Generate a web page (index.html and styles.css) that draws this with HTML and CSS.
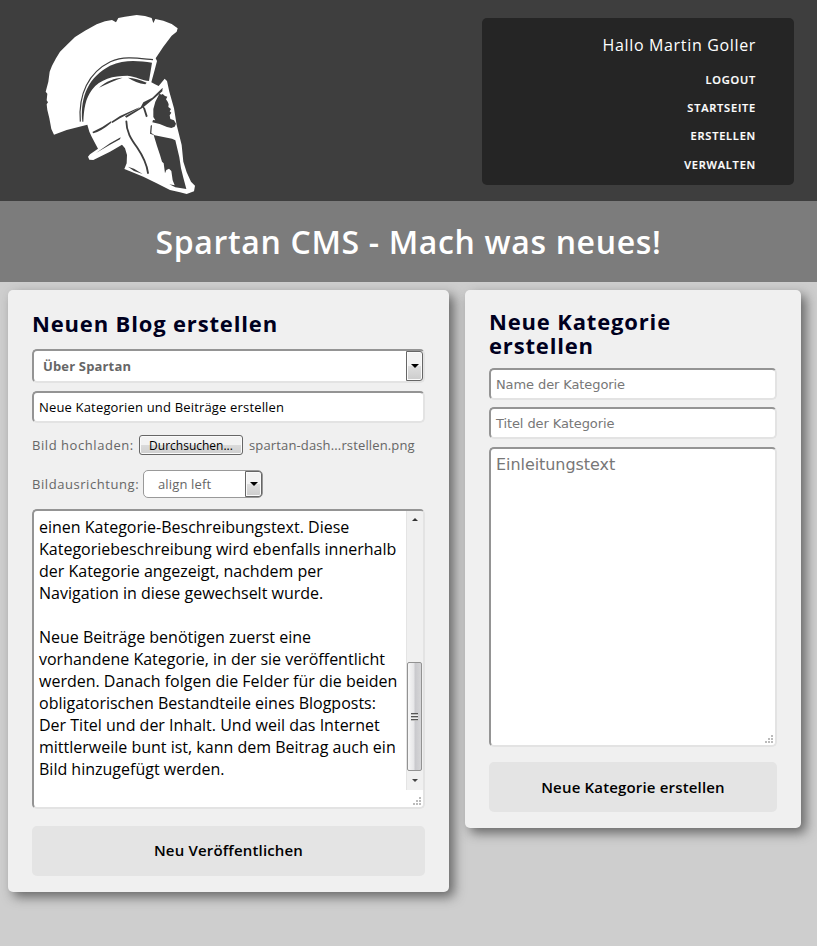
FILE: index.html
```html
<!DOCTYPE html>
<html lang="de">
<head>
<meta charset="utf-8">
<title>Spartan CMS</title>
<link rel="stylesheet" href="styles.css">
</head>
<body>
<header class="top">
  <svg class="logo" viewBox="0 0 540 600" aria-hidden="true">
    <path fill="#fff" d="M72 389L64 372 58 340 52 315 50 298 54 292 50 286 52 266 47 260 55 230 59 200 66 182 78 160 90 140 108 122 135 96 165 77 200 58 225 49 246 45 258 52 265 39 285 35 320 30 345 33 365 39 370 54 376 42 400 47 425 57 443 70 440 80 425 92 400 125 377 160 381 168 374 195 364 232 375 238 386 243 404 221 411 228 418 260 432 310 440 360 455 420 460 470 470 502 483 530 495 542 492 559 470 567 450 562 420 555 380 535 340 515 300 499 283 492 290 475 291 450 285 430 276 419 240 440 190 465 178 464 174 455 180 448 204 431 185 395 178 380 172 359 110 375Z"/>
    <g fill="#3e3e3e">
      <path d="M157 350C150 270 178 215 240 182C285 162 325 167 366 173L357 228C337 227 321 215 292 212C250 212 210 222 186 254C166 281 162 310 160 350Z"/>
      <path d="M207 248C228 228 254 219 278 218C256 224 230 237 207 248ZM294 218Q320 219 350 233L346 238Q317 233 294 218Z"/>
      <path d="M187 381Q215 370 243 349L244 353Q214 378 190 385ZM244 350L270 333 330 306 318 314 270 340 247 354ZM285 334L332 307 340 292 367 278 398 248 397 259 374 279 338 308 289 338Z"/>
      <path d="M337 302L345 309 353 334 348 337ZM198 444L240 415 272 397 270 403 240 419ZM294 485L312 491 338 507 312 498Z"/>
      <path d="M389 265L393 269 398 267 405 273 412 275 408 283 413 290 416 298 415 306 423 312 419 319 424 323 419 331 421 342 432 346 438 356 434 365 424 369 411 366 389 357 367 352 369 345 376 346 370 336 370 312 376 290Z"/>
      <path d="M362 362L360 386 371 390 381 423 390 450 396 470 401 475 405 505 409 495 417 491 424 498 428 526 434 541 418 538 436 547 469 552 460 518 453 490 448 457 436 406 426 401 374 391 364 384 366 360Z"/>
    </g>
    <path fill="none" stroke="#3e3e3e" stroke-width="3.5" d="M151 350C144 268 176 202 241 170C284 152 325 160 369 164"/>
    <path fill="none" stroke="#3e3e3e" stroke-width="5.5" stroke-linecap="round" d="M289 349C289 380 303 402 321 427C338 452 350 476 354 504"/>
  </svg>
  <nav class="user">
    <p class="hello">Hallo Martin Goller</p>
    <a>LOGOUT</a>
    <a>STARTSEITE</a>
    <a>ERSTELLEN</a>
    <a>VERWALTEN</a>
  </nav>
</header>
<h1 class="title">Spartan CMS - Mach was neues!</h1>
<main class="content">
  <section class="card blog">
    <h2>Neuen Blog erstellen</h2>
    <div class="field select"><b>Über Spartan</b><span class="arrow"></span></div>
    <div class="field text"><span class="posttitle">Neue Kategorien und Beiträge erstellen</span></div>
    <div class="row upload"><span class="lbl">Bild hochladen:</span><span class="browse"><span>Durchsuchen...</span></span><span class="file">spartan-dash...rstellen.png</span></div>
    <div class="row align"><span class="lbl">Bildausrichtung:</span><div class="mini"><span>align left</span><span class="arrow"></span></div></div>
    <div class="field area">
      <div class="copy">einen Kategorie-Beschreibungstext. Diese
Kategoriebeschreibung wird ebenfalls innerhalb
der Kategorie angezeigt, nachdem per
Navigation in diese gewechselt wurde.

Neue Beiträge benötigen zuerst eine
vorhandene Kategorie, in der sie veröffentlicht
werden. Danach folgen die Felder für die beiden
obligatorischen Bestandteile eines Blogposts:
Der Titel und der Inhalt. Und weil das Internet
mittlerweile bunt ist, kann dem Beitrag auch ein
Bild hinzugefügt werden.</div>
      <div class="scroll"><i class="up"></i><div class="thumb"><i></i></div><i class="down"></i></div>
      <svg class="grip" viewBox="0 0 8 8"><path d="M6 0h2v2H6zM3 3h2v2H3zM6 3h2v2H6zM0 6h2v2H0zM3 6h2v2H3zM6 6h2v2H6z"/></svg>
    </div>
    <div class="btn"><span>Neu Veröffentlichen</span></div>
  </section>
  <section class="card cat">
    <h2>Neue Kategorie erstellen</h2>
    <div class="field text ph"><span class="p1">Name der Kategorie</span></div>
    <div class="field text ph"><span class="p2">Titel der Kategorie</span></div>
    <div class="field area ph"><span class="intro">Einleitungstext</span>
      <svg class="grip" viewBox="0 0 8 8"><path d="M6 0h2v2H6zM3 3h2v2H3zM6 3h2v2H6zM0 6h2v2H0zM3 6h2v2H3zM6 6h2v2H6z"/></svg>
    </div>
    <div class="btn"><span>Neue Kategorie erstellen</span></div>
  </section>
</main>
</body>
</html>
```
FILE: styles.css
```css
* { box-sizing: border-box; }
body {
  margin: 0;
  min-height: 946px;
  background: #cecece;
  font-family: "Open Sans", "Noto Sans", sans-serif;
  color: #000;
}
.top {
  height: 201px;
  background: #3e3e3e;
  display: flex;
  justify-content: space-between;
  padding: 5px 23px 0 30px;
}
.logo { width: 180px; height: 200px; margin-bottom: -4px; }
.user {
  margin-top: 13px;
  width: 312px;
  height: 167px;
  border-radius: 5px;
  background: #252525;
  color: #fff;
  padding: 15px 38px 0 0;
  display: flex;
  flex-direction: column;
  align-items: flex-end;
}
.hello { margin: 0 0 9px; font-size: 16px; line-height: 24px; letter-spacing: .66px; }
.user a { font-size: 11px; font-weight: 600; line-height: 28px; letter-spacing: .8px; -webkit-text-stroke: .2px #fff; }
.user a:last-child { margin-top: 1px; }
.title {
  margin: 0;
  height: 81px;
  background: #7c7c7c;
  color: #fff;
  font-size: 32px;
  font-weight: 600;
  line-height: 81px;
  text-align: center;
  letter-spacing: .65px;
}
.content { display: flex; align-items: flex-start; gap: 16px; padding: 8px; }
.card {
  background: #f0f0f0;
  border-radius: 5px;
  box-shadow: 5px 5px 12px #666;
  padding: 0 24px;
}
.blog { width: 441px; height: 602px; }
.cat { width: 336px; height: 538px; }
h2 { margin: 0; color: #00001e; font-size: 22px; font-weight: 700; line-height: 24px; letter-spacing: .84px; white-space: nowrap; }
.blog h2 { padding-top: 21px; height: 59px; }
.cat h2 { padding-top: 19px; height: 78px; white-space: normal; }
.field {
  position: relative;
  border: 2px solid;
  border-color: #949494 #e3e3e3 #e3e3e3 #949494;
  border-radius: 5px;
  background: #fff;
  display: flex;
  white-space: nowrap;
}
.select { height: 34px; justify-content: space-between; color: #666; font-size: 13px; line-height: 31px; letter-spacing: .16px; padding-left: 9px; }
.arrow {
  width: 17px;
  border: 1px solid #666;
  border-radius: 0 3px 3px 0;
  box-shadow: inset 0 0 0 1px #fafafa;
  background: linear-gradient(#f3f3f3 0 48%, #dedede 52%, #ccc);
  display: flex;
  align-items: center;
  justify-content: center;
}
.arrow::after { content: ""; border: 4px solid transparent; border-top-color: #000; border-bottom: 0; }
.text { height: 32px; margin-top: 8px; padding-left: 5px; font-size: 13px; line-height: 28px; }
.posttitle { letter-spacing: .17px; }
.row { display: flex; align-items: center; font-size: 13px; color: #666; white-space: nowrap; }
.lbl { letter-spacing: .56px; }
.upload { height: 20px; margin-top: 12px; }
.upload .lbl { width: 107px; }
.browse {
  width: 104px;
  height: 20px;
  border: 1px solid #666;
  border-radius: 3px;
  box-shadow: inset 0 0 0 1px #fafafa;
  background: linear-gradient(#f2f2f2 0 48%, #dadada 52%, #cfcfcf);
  color: #000;
  font-size: 12px;
  line-height: 19px;
  text-align: center;
  margin-right: 6px;
}
.file { letter-spacing: .14px; }
.align { height: 28px; margin-top: 15px; }
.align .lbl { width: 111px; }
.mini { width: 120px; height: 28px; border: 1px solid #999; border-radius: 5px; background: #fff; padding-left: 14px; line-height: 26px; letter-spacing: .15px; display: flex; justify-content: space-between; }
.area { height: 300px; margin-top: 11px; overflow: hidden; }
.copy { padding: 5px 0 0 5px; font-size: 16px; line-height: 22px; white-space: pre; }
.scroll {
  position: absolute;
  right: 0;
  top: 0;
  width: 17px;
  height: 279px;
  padding-right: 1px;
  border-left: 1px solid #e4e4e4;
  background: #f0f0f0;
  display: flex;
  flex-direction: column;
  align-items: center;
}
.up { margin-top: 7px; border: 3.5px solid transparent; border-bottom-color: #333; border-top: 0; }
.thumb {
  margin-top: 141px;
  width: 15px;
  height: 109px;
  border: 1px solid #929292;
  border-radius: 2px;
  background: linear-gradient(90deg, #f7f7f7, #e6e6e8 45%, #c9c9cd 55%, #d6d6d8);
  display: flex;
  align-items: center;
  justify-content: center;
}
.thumb i { width: 7px; height: 8px; background: repeating-linear-gradient(#555 0 1px, #bbb 1px 2px, #eee 2px 3px); }
.down { margin-top: 8px; border: 3.5px solid transparent; border-top-color: #444; border-bottom: 0; }
.grip { position: absolute; right: 2px; bottom: 2px; width: 8px; height: 8px; fill: #bbb; }
.btn { height: 50px; margin-top: 17px; border-radius: 5px; background: #e4e4e4; text-align: center; font-size: 15px; font-weight: 600; line-height: 49px; letter-spacing: .17px; }
.ph { color: #777; font-family: "DejaVu Sans", sans-serif; }
.cat .text { margin-top: 0; margin-bottom: 7px; line-height: 29px; letter-spacing: -.1px; }
.cat .area { margin-top: 8px; }
.cat .btn { margin-top: 15px; line-height: 50px; }
.intro { padding: 5px 0 0 5px; font-size: 16px; line-height: 22px; letter-spacing: -.06px; }
```
